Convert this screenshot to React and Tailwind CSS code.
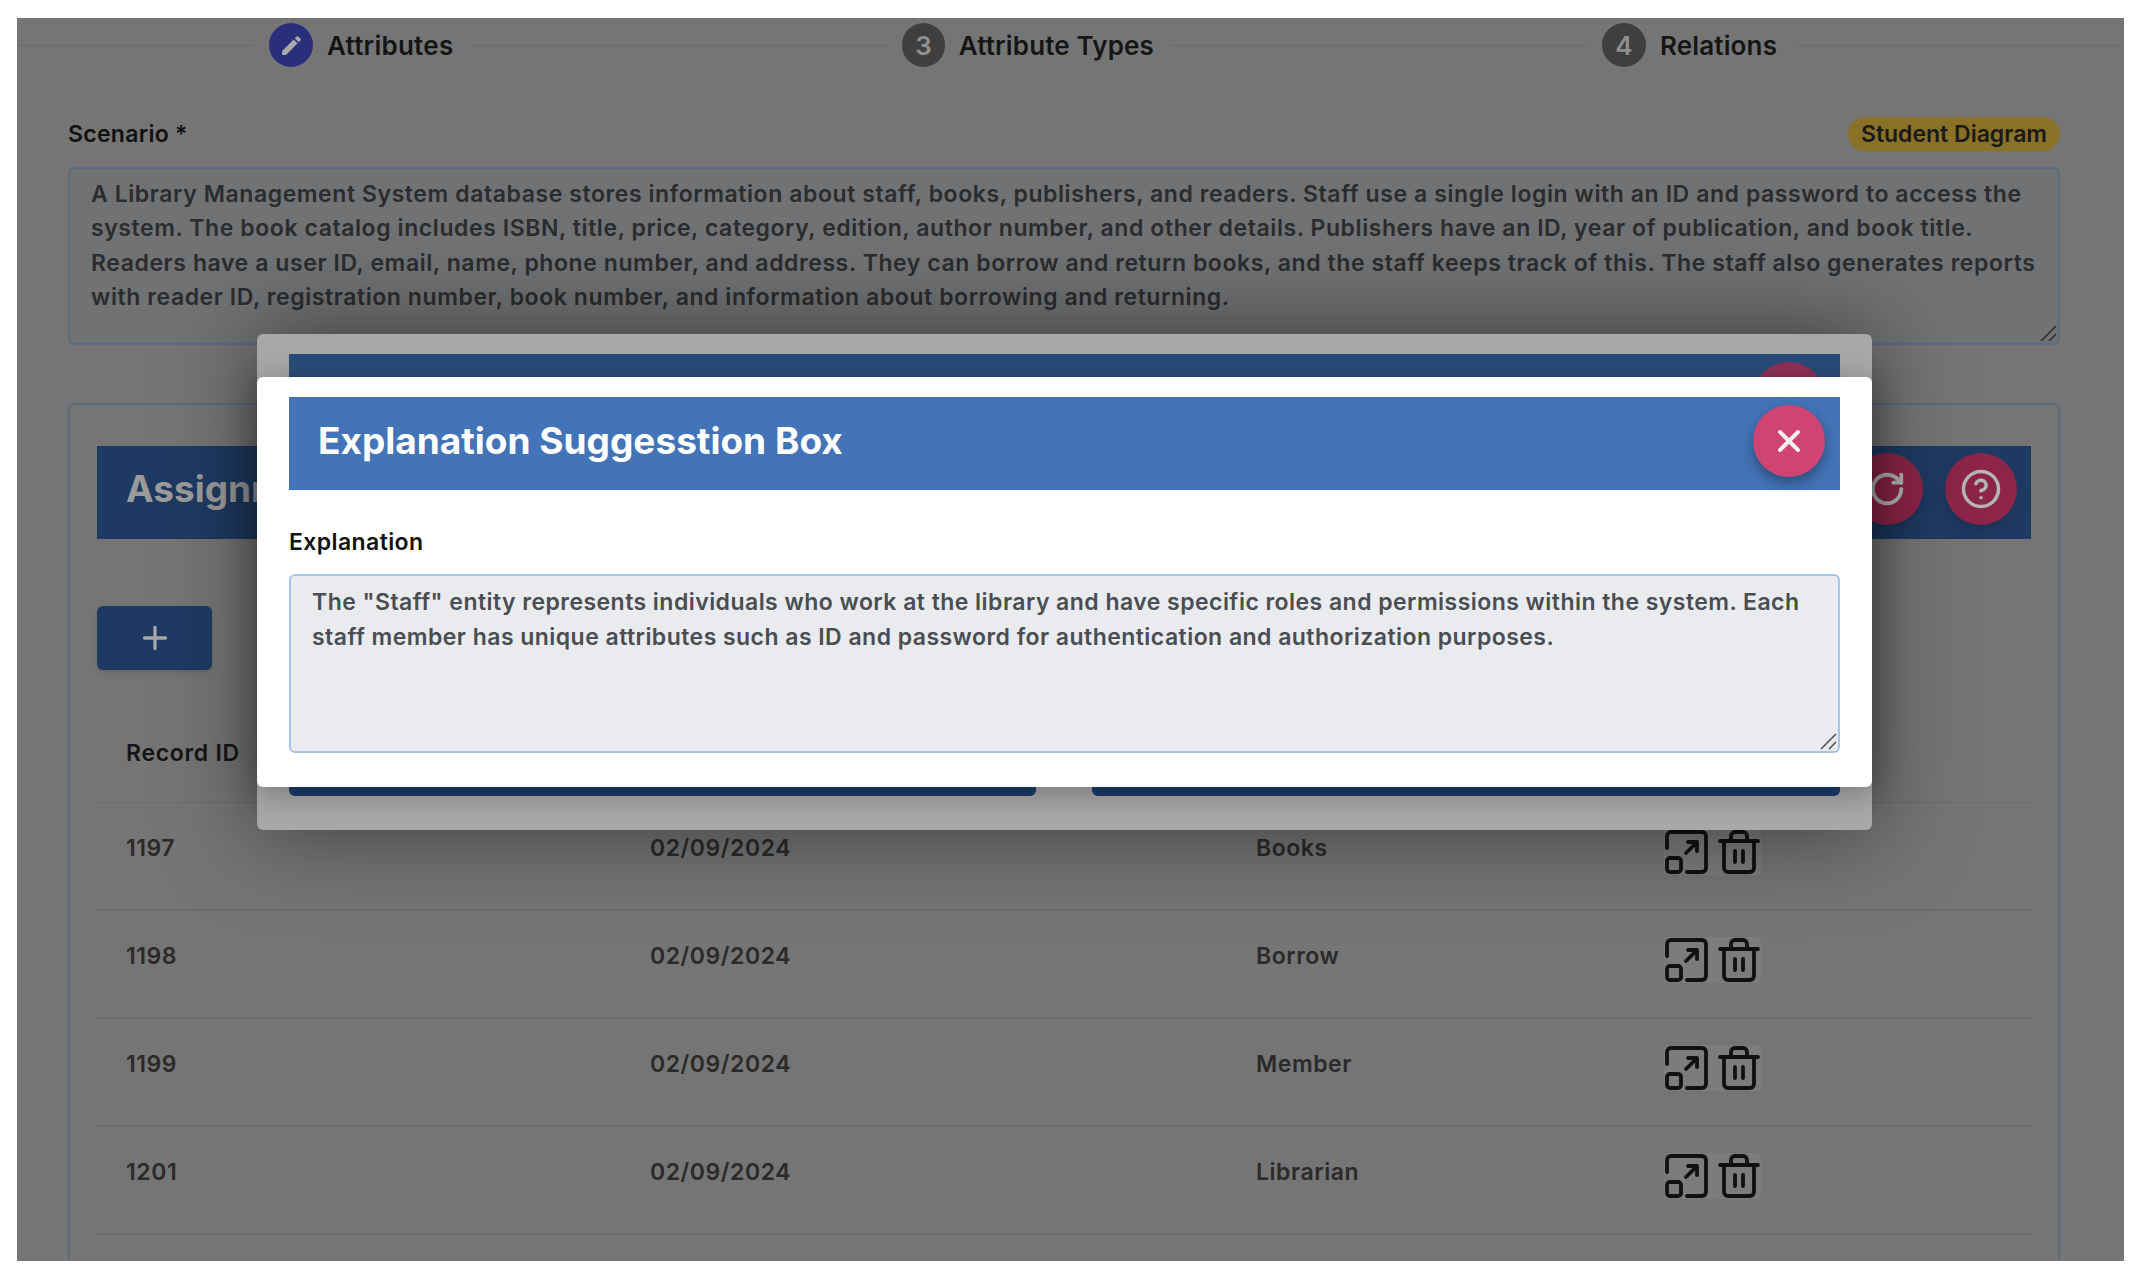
import { X, Plus, RotateCw, CircleHelp } from 'lucide-react';
import { MdEdit } from 'react-icons/md';

const scenario = `A Library Management System database stores information about staff, books, publishers, and readers. Staff use a single login with an ID and password to access the
system. The book catalog includes ISBN, title, price, category, edition, author number, and other details. Publishers have an ID, year of publication, and book title.
Readers have a user ID, email, name, phone number, and address. They can borrow and return books, and the staff keeps track of this. The staff also generates reports
with reader ID, registration number, book number, and information about borrowing and returning.`;

const explanation = `The "Staff" entity represents individuals who work at the library and have specific roles and permissions within the system. Each
staff member has unique attributes such as ID and password for authentication and authorization purposes.`;

const records = [
  { id: '1197', date: '02/09/2024', name: 'Books' },
  { id: '1198', date: '02/09/2024', name: 'Borrow' },
  { id: '1199', date: '02/09/2024', name: 'Member' },
  { id: '1201', date: '02/09/2024', name: 'Librarian' },
];

function ResizeIcon() {
  return (
    <svg width="46" height="46" viewBox="0 0 46 46" fill="none" stroke="#111" strokeWidth="3.8" strokeLinecap="round" strokeLinejoin="round">
      <path d="M3 19V7a4 4 0 0 1 4-4h31a4 4 0 0 1 4 4v32a4 4 0 0 1-4 4H23" />
      <rect x="3" y="29" width="14" height="14" rx="3" />
      <path d="M22 24 33 13M24 13h9v9" />
    </svg>
  );
}

function TrashIcon() {
  return (
    <svg width="44" height="46" viewBox="0 0 44 46" fill="none" stroke="#111" strokeWidth="3.8" strokeLinecap="round" strokeLinejoin="round">
      <path d="M3 12h38" />
      <path d="M14 11V7a4 4 0 0 1 4-4h8a4 4 0 0 1 4 4v4" />
      <path d="M7 12v27a4 4 0 0 0 4 4h22a4 4 0 0 0 4-4V12" />
      <path d="M18 22v11M26 22v11" />
    </svg>
  );
}

// stands in for the browser's textarea grip, which is drawn larger in the picture
function ResizeGrip({ color }) {
  return (
    <svg width="18" height="18" viewBox="0 0 18 18" fill="none" stroke={color} strokeWidth="1.6" className="pointer-events-none absolute bottom-[3px] right-[3px]">
      <path d="M2 17 17 2M10 17l7-7" />
    </svg>
  );
}

function Line({ width }) {
  return <div className={`h-px bg-[#6b6b6b] ${width}`} />;
}

function Step({ icon, label }) {
  return (
    <div className="flex items-center gap-[14px]">
      <span className="flex h-[44px] w-[44px] items-center justify-center rounded-full bg-[#3f3f3f] text-[26px] font-semibold text-[#8f8f8f]">
        {icon}
      </span>
      <span className="whitespace-nowrap text-[26px] font-semibold tracking-[0.15px] text-[#151515]">{label}</span>
    </div>
  );
}

function Stepper() {
  return (
    <div className="flex h-[54px] items-center">
      <Line width="w-[238px]" />
      <div className="ml-[14px] flex items-center gap-[14px]">
        <span className="flex h-[44px] w-[44px] items-center justify-center rounded-full bg-[#2a2f7c] text-[#a9a9a9]">
          <MdEdit size={25} />
        </span>
        <span className="w-[126px] whitespace-nowrap text-[26px] font-semibold tracking-[0.25px] text-[#151515]">Attributes</span>
      </div>
      <div className="ml-[18px] mr-[14px]"><Line width="w-[417px]" /></div>
      <div className="w-[252px]"><Step icon="3" label="Attribute Types" /></div>
      <div className="ml-[16px] mr-[15px]"><Line width="w-[417px]" /></div>
      <div className="w-[193px]"><Step icon="4" label="Relations" /></div>
      <Line width="flex-1" />
    </div>
  );
}

function ScenarioField() {
  return (
    <div className="ml-[51px] mr-[64px] mt-[45px]">
      <div className="flex items-center justify-between">
        <span className="text-[23px] font-semibold tracking-[0.3px] text-[#111]">Scenario *</span>
        <span className="flex h-[34px] w-[212px] items-center justify-center rounded-full bg-[#8a7128] text-[23px] font-semibold text-[#1a1a1a]">
          Student Diagram
        </span>
      </div>
      <div className="relative mt-[15px]">
        <textarea
          readOnly
          value={scenario}
          wrap="off"
          className="block h-[178px] w-full resize-none overflow-hidden rounded-md border-2 border-[#5d6c82] bg-[#707274] px-[21px] py-[8px] text-[23px] font-semibold leading-[34.5px] tracking-[0.58px] text-[#2b2c2e] outline-none"
        />
        <ResizeGrip color="#2e2e2e" />
      </div>
    </div>
  );
}

function RecordsCard() {
  return (
    <div className="ml-[51px] mr-[64px] mt-[58px] h-[900px] rounded-md border-2 border-[#5f6b7b] px-[27px] pt-[41px]">
      <div className="flex h-[93px] items-center justify-between bg-[#1f3a62] pb-[6px] pl-[29px] pr-[14px]">
        <span className="text-[37px] font-bold text-[#9b9b9b]">Assignment</span>
        <div className="flex items-center gap-[22px]">
          <button className="flex h-[72px] w-[72px] items-center justify-center rounded-full bg-[#8c2549] text-[#b5b5b5] shadow-lg">
            <RotateCw size={38} strokeWidth={2.4} />
          </button>
          <button className="flex h-[72px] w-[72px] items-center justify-center rounded-full bg-[#8c2549] text-[#b5b5b5] shadow-lg">
            <CircleHelp size={42} strokeWidth={2} />
          </button>
        </div>
      </div>

      <button className="mt-[67px] flex h-[64px] w-[115px] items-center justify-center rounded-md bg-[#1e3a63] text-[#a8a8a8] shadow-md">
        <Plus size={36} strokeWidth={2.2} />
      </button>

      <div className="flex h-[133px] items-center border-b border-[#6c6c6c] pl-[29px] pt-[36px] text-[23px] font-semibold tracking-[0.7px] text-[#151515]">
        Record ID
      </div>

      {records.map((row) => (
        <div
          key={row.id}
          className="grid h-[108px] grid-cols-[524px_606px_408px_1fr] items-center border-b-2 border-[#6c6c6c] pb-[10px] pl-[29px] text-[23px] font-semibold tracking-[0.55px] text-[#2a2a2a]"
        >
          <span className="mb-1">{row.id}</span>
          <span className="mb-1">{row.date}</span>
          <span className="mb-1">{row.name}</span>
          <div className="mt-[2px] flex w-fit items-center gap-[7px] rounded bg-white/5">
            <ResizeIcon />
            <TrashIcon />
          </div>
        </div>
      ))}
    </div>
  );
}

// the modal that sits behind, mostly hidden by the front one
function BackModal() {
  return (
    <div className="absolute left-[240px] top-[316px] flex h-[496px] w-[1615px] flex-col justify-between rounded-md bg-[#a8a8a8] px-[32px] pb-[34px] pt-[20px] shadow-[0_0_90px_rgba(0,0,0,0.5)]">
      <div className="flex h-[93px] justify-end bg-[#2b4c7a] pr-[15px] pt-[8px]">
        <span className="h-[72px] w-[72px] rounded-full bg-[#8f3058]" />
      </div>
      <div className="flex justify-between">
        <div className="h-[60px] w-[747px] rounded-md bg-[#1e3c6c]" />
        <div className="h-[60px] w-[748px] rounded-md bg-[#1e3c6c]" />
      </div>
    </div>
  );
}

function FrontModal() {
  return (
    <div className="absolute left-[240px] top-[359px] h-[410px] w-[1615px] rounded-md bg-white px-[32px] pt-[20px] shadow-[0_6px_30px_rgba(0,0,0,0.3)]">
      <div className="flex h-[93px] items-center justify-between border-y border-[#3f6fc0] bg-[#4374b8] pb-[6px] pl-[29px] pr-[15px]">
        <h2 className="text-[37px] font-bold text-white">Explanation Suggesstion Box</h2>
        <button className="flex h-[72px] w-[72px] items-center justify-center rounded-full bg-[#cf4472] text-[#f0f0f0] shadow-[0_6px_14px_rgba(0,0,0,0.35)]">
          <X size={36} strokeWidth={2.6} />
        </button>
      </div>
      <label className="mt-[36px] block text-[23px] font-semibold leading-[32px] tracking-[0.4px] text-[#111]">Explanation</label>
      <div className="relative mt-[16px]">
        <textarea
          readOnly
          value={explanation}
          wrap="off"
          className="block h-[179px] w-full resize-none overflow-hidden rounded-md border-2 border-[#a9c4ea] bg-[#e9ebef] px-[21px] py-[9px] text-[23px] font-semibold leading-[34.5px] tracking-[0.46px] text-[#4a4d52] outline-none"
        />
        <ResizeGrip color="#555555" />
      </div>
    </div>
  );
}

export default function App() {
  return (
    <div className="h-[1284px] w-full overflow-hidden bg-white pl-[17px] pr-[18px] pt-[18px] font-['Inter',sans-serif]">
      <div className="relative h-[1243px] overflow-hidden bg-[#757575]">
        <Stepper />
        <ScenarioField />
        <RecordsCard />
        <BackModal />
        <FrontModal />
      </div>
    </div>
  );
}
